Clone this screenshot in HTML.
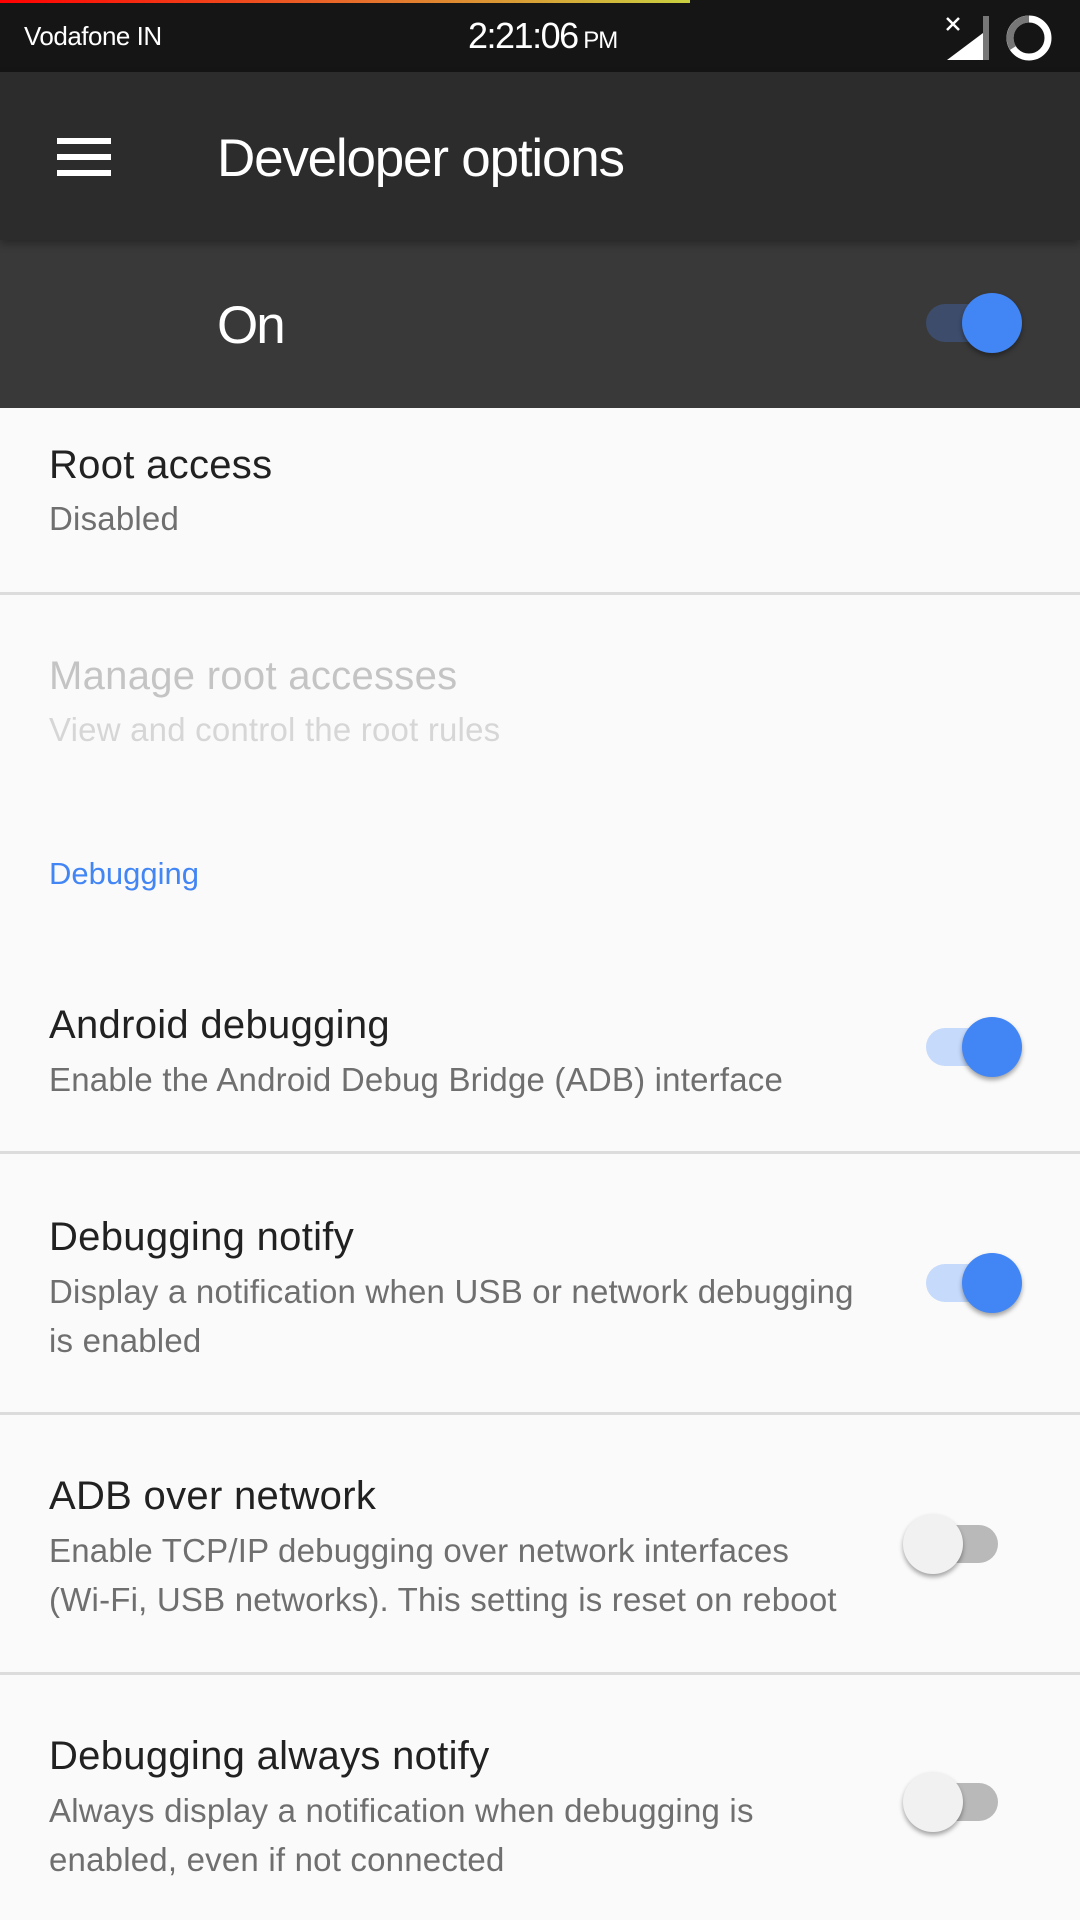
<!DOCTYPE html>
<html><head><meta charset="utf-8"><style>
*{margin:0;padding:0;box-sizing:border-box}
body{width:1080px;height:1920px;background:#fafafa;font-family:"Liberation Sans",sans-serif;position:relative;overflow:hidden}
.a{position:absolute;white-space:nowrap}
.t{left:49px;font-size:40px;color:#212121;line-height:48px;letter-spacing:0.3px}
.s{left:49px;font-size:33px;color:#6f6f6f;line-height:40px;letter-spacing:0.2px}
.line{position:absolute;left:0;width:1080px;height:3px;background:#dcdcdc}
.track{position:absolute;width:90px;height:38px;border-radius:19px}
.thumb{position:absolute;width:60px;height:60px;border-radius:50%;box-shadow:0 3px 5px rgba(0,0,0,.35)}
</style></head><body>
<div class="a" style="left:0;top:0;width:1080px;height:72px;background:#151515"></div>
<div class="a" style="left:0;top:0;width:690px;height:3px;background:linear-gradient(90deg,#f00,#e86a2a,#c9d040)"></div>
<div class="a" style="left:24px;top:18px;font-size:26px;color:#fff;line-height:36px;letter-spacing:-0.5px">Vodafone IN</div>
<div class="a" style="left:468px;top:14px;font-size:36px;color:#fff;line-height:44px;letter-spacing:-1.5px">2:21:06<span style="font-size:24px;letter-spacing:-1px"> PM</span></div>
<svg class="a" style="left:945px;top:14px" width="110" height="50" viewBox="0 0 110 50">
<path d="M2 4 L14 16 M14 4 L2 16" stroke="#fff" stroke-width="2.5"/>
<polygon points="2,46 42,46 42,16" fill="#fff"/>
<rect x="38" y="2" width="6" height="44" fill="#777"/>
<circle cx="84" cy="24" r="19" fill="none" stroke="#fff" stroke-width="7"/>
<path d="M84 5 A19 19 0 0 0 68 34" fill="none" stroke="#777" stroke-width="7"/>
</svg>
<div class="a" style="left:0;top:72px;width:1080px;height:168px;background:#2c2c2c;box-shadow:0 4px 8px rgba(0,0,0,.3);z-index:2"></div>
<div class="a" style="left:57px;top:138px;width:54px;height:6px;background:#fff;z-index:3"></div>
<div class="a" style="left:57px;top:154px;width:54px;height:6px;background:#fff;z-index:3"></div>
<div class="a" style="left:57px;top:170px;width:54px;height:6px;background:#fff;z-index:3"></div>
<div class="a" style="left:217px;top:128px;font-size:53px;color:#fff;line-height:62px;letter-spacing:-1.2px;z-index:3">Developer options</div>
<div class="a" style="left:0;top:240px;width:1080px;height:168px;background:#393939"></div>
<div class="a" style="left:217px;top:295px;font-size:53px;color:#fff;line-height:62px;letter-spacing:-2px">On</div>
<div class="track" style="left:926px;top:304px;background:#3c4c6a"></div>
<div class="thumb" style="left:962px;top:293px;background:#4285f4"></div>

<div class="a t" style="top:441px">Root access</div>
<div class="a s" style="top:499px">Disabled</div>
<div class="line" style="top:592px"></div>

<div class="a t" style="top:652px;color:#c4c4c4">Manage root accesses</div>
<div class="a s" style="top:710px;color:#d6d6d6">View and control the root rules</div>

<div class="a" style="left:49px;top:856px;font-size:31px;color:#4285f4;line-height:36px">Debugging</div>

<div class="a t" style="top:1001px">Android debugging</div>
<div class="a s" style="top:1060px">Enable the Android Debug Bridge (ADB) interface</div>
<div class="track" style="left:926px;top:1028px;background:#c6dafb"></div>
<div class="thumb" style="left:962px;top:1017px;background:#4285f4"></div>
<div class="line" style="top:1151px"></div>

<div class="a t" style="top:1213px">Debugging notify</div>
<div class="a s" style="top:1272px">Display a notification when USB or network debugging</div>
<div class="a s" style="top:1321px">is enabled</div>
<div class="track" style="left:926px;top:1264px;background:#c6dafb"></div>
<div class="thumb" style="left:962px;top:1253px;background:#4285f4"></div>
<div class="line" style="top:1412px"></div>

<div class="a t" style="top:1472px">ADB over network</div>
<div class="a s" style="top:1531px">Enable TCP/IP debugging over network interfaces</div>
<div class="a s" style="top:1580px">(Wi-Fi, USB networks). This setting is reset on reboot</div>
<div class="track" style="left:908px;top:1525px;background:#b9b9b9"></div>
<div class="thumb" style="left:903px;top:1514px;background:#f1f1f1"></div>
<div class="line" style="top:1672px"></div>

<div class="a t" style="top:1732px">Debugging always notify</div>
<div class="a s" style="top:1791px">Always display a notification when debugging is</div>
<div class="a s" style="top:1840px">enabled, even if not connected</div>
<div class="track" style="left:908px;top:1783px;background:#b9b9b9"></div>
<div class="thumb" style="left:903px;top:1772px;background:#f1f1f1"></div>
</body></html>
